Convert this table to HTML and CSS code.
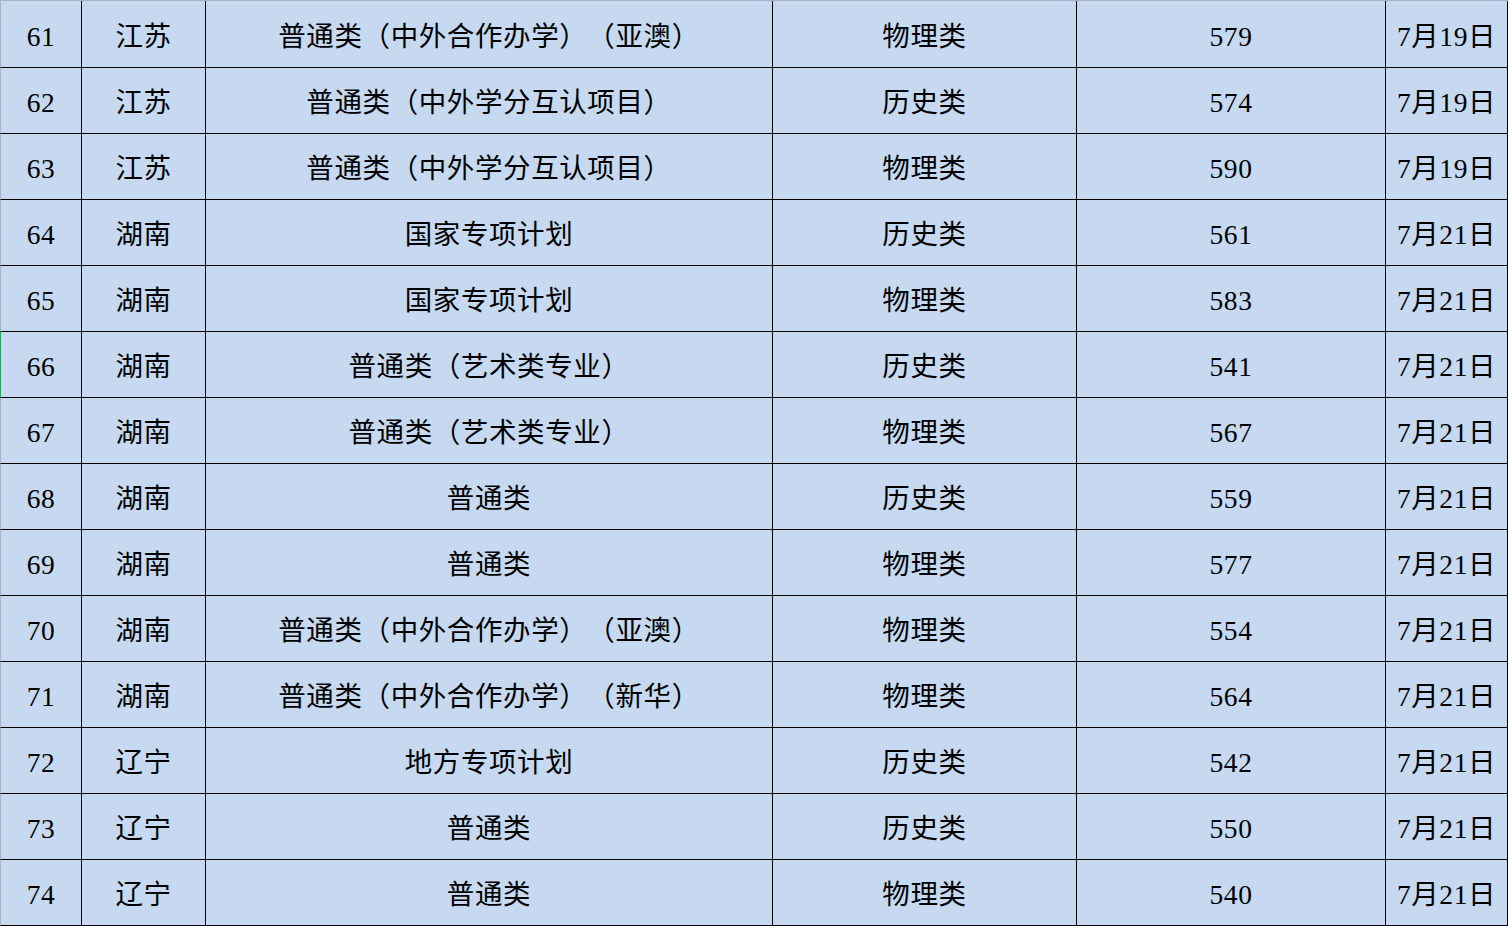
FILE: index.html
```html
<!DOCTYPE html>
<html lang="zh-CN">
<head>
<meta charset="utf-8">
<title>录取分数</title>
<link rel="stylesheet" href="styles.css">
</head>
<body>
<div class="sheet">
  <div class="row first"><div class="c c1">61</div><div class="c c2">江苏</div><div class="c c3">普通类（中外合作办学）（亚澳）</div><div class="c c4">物理类</div><div class="c c5">579</div><div class="c c6">7月19日</div></div>
  <div class="row"><div class="c c1">62</div><div class="c c2">江苏</div><div class="c c3">普通类（中外学分互认项目）</div><div class="c c4">历史类</div><div class="c c5">574</div><div class="c c6">7月19日</div></div>
  <div class="row"><div class="c c1">63</div><div class="c c2">江苏</div><div class="c c3">普通类（中外学分互认项目）</div><div class="c c4">物理类</div><div class="c c5">590</div><div class="c c6">7月19日</div></div>
  <div class="row"><div class="c c1">64</div><div class="c c2">湖南</div><div class="c c3">国家专项计划</div><div class="c c4">历史类</div><div class="c c5">561</div><div class="c c6">7月21日</div></div>
  <div class="row"><div class="c c1">65</div><div class="c c2">湖南</div><div class="c c3">国家专项计划</div><div class="c c4">物理类</div><div class="c c5">583</div><div class="c c6">7月21日</div></div>
  <div class="row"><div class="c c1 active">66</div><div class="c c2">湖南</div><div class="c c3">普通类（艺术类专业）</div><div class="c c4">历史类</div><div class="c c5">541</div><div class="c c6">7月21日</div></div>
  <div class="row"><div class="c c1">67</div><div class="c c2">湖南</div><div class="c c3">普通类（艺术类专业）</div><div class="c c4">物理类</div><div class="c c5">567</div><div class="c c6">7月21日</div></div>
  <div class="row"><div class="c c1">68</div><div class="c c2">湖南</div><div class="c c3">普通类</div><div class="c c4">历史类</div><div class="c c5">559</div><div class="c c6">7月21日</div></div>
  <div class="row"><div class="c c1">69</div><div class="c c2">湖南</div><div class="c c3">普通类</div><div class="c c4">物理类</div><div class="c c5">577</div><div class="c c6">7月21日</div></div>
  <div class="row"><div class="c c1">70</div><div class="c c2">湖南</div><div class="c c3">普通类（中外合作办学）（亚澳）</div><div class="c c4">物理类</div><div class="c c5">554</div><div class="c c6">7月21日</div></div>
  <div class="row"><div class="c c1">71</div><div class="c c2">湖南</div><div class="c c3">普通类（中外合作办学）（新华）</div><div class="c c4">物理类</div><div class="c c5">564</div><div class="c c6">7月21日</div></div>
  <div class="row"><div class="c c1">72</div><div class="c c2">辽宁</div><div class="c c3">地方专项计划</div><div class="c c4">历史类</div><div class="c c5">542</div><div class="c c6">7月21日</div></div>
  <div class="row"><div class="c c1">73</div><div class="c c2">辽宁</div><div class="c c3">普通类</div><div class="c c4">历史类</div><div class="c c5">550</div><div class="c c6">7月21日</div></div>
  <div class="row"><div class="c c1">74</div><div class="c c2">辽宁</div><div class="c c3">普通类</div><div class="c c4">物理类</div><div class="c c5">540</div><div class="c c6">7月21日</div></div>
</div>
</body>
</html>
```

FILE: styles.css
```css
html, body {
  margin: 0;
  padding: 0;
  background: #c6d9f0;
}
.sheet {
  width: 1508px;
  border-top: 1px solid #a9b1c4;
  box-sizing: border-box;
  font-family: "Liberation Serif", "Noto Sans CJK SC", serif;
  font-size: 27.5px;
  line-height: 28px;
  letter-spacing: 0.6px;
  text-spacing-trim: space-all;
  color: #000;
  background: #c6d9f0;
}
.row {
  display: grid;
  grid-template-columns: 82px 124px 567px 304px 309px 122px;
  height: 66px;
}
.row.first {
  height: 67px;
}
.c {
  box-sizing: border-box;
  border-right: 1px solid #000;
  border-bottom: 1px solid #000;
  display: flex;
  align-items: center;
  justify-content: center;
  padding-top: 5px;
  white-space: nowrap;
}
.c1 {
  border-left: 1px solid #a9b1c4;
}
.c1.active {
  border-left-color: #1fa463;
}
```
